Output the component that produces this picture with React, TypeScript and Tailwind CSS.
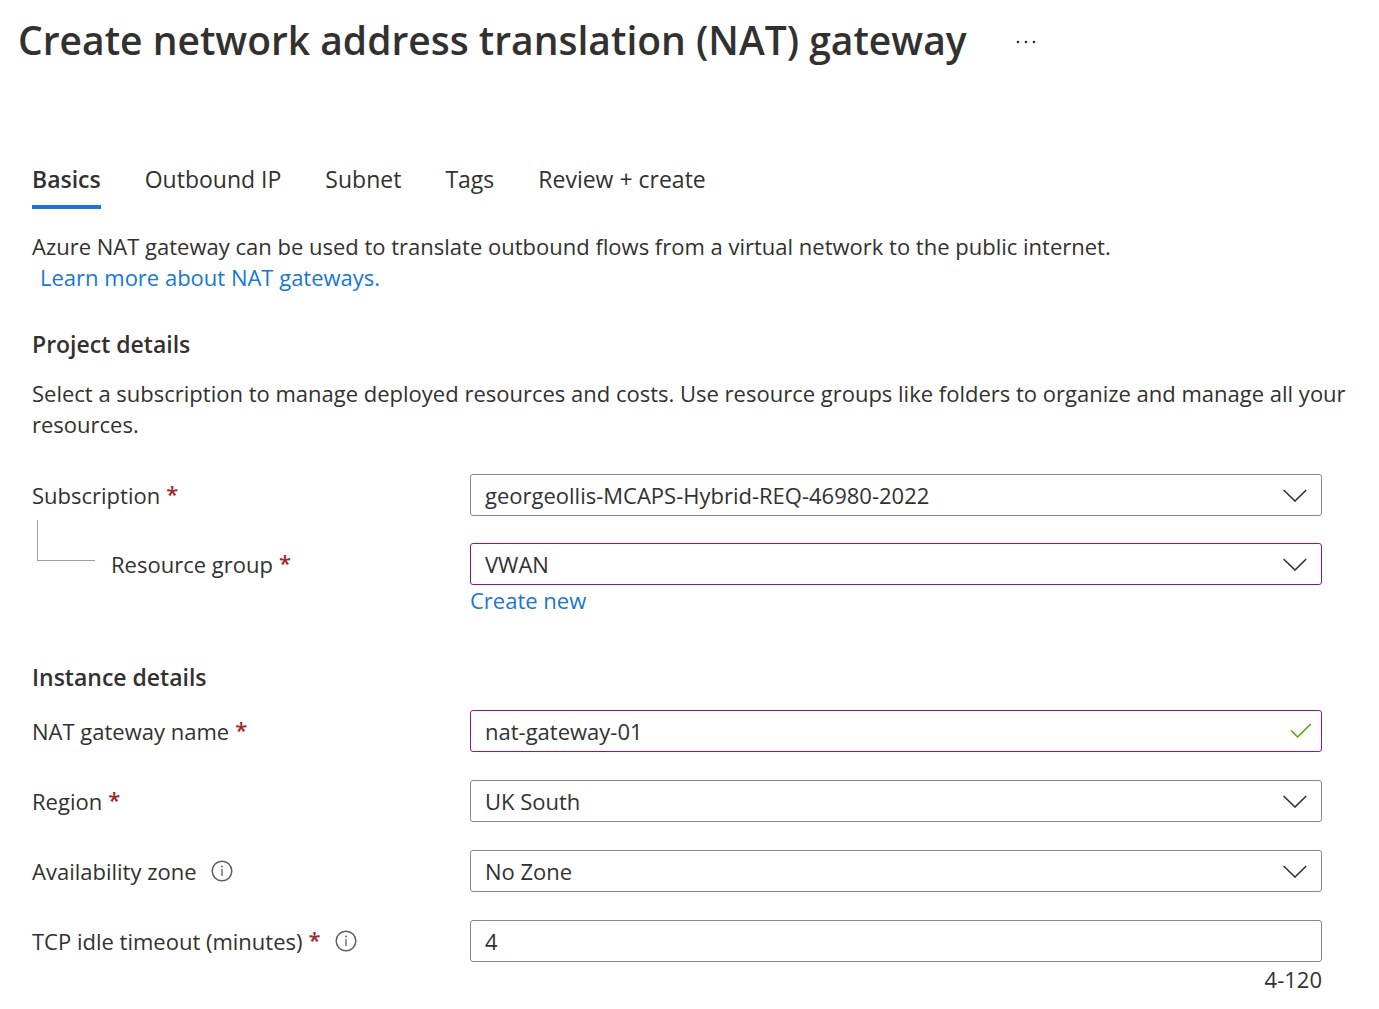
import React, { useState } from 'react';

const TABS = ['Basics', 'Outbound IP', 'Subnet', 'Tags', 'Review + create'];

function Required() {
    return <span className="ml-1.5 align-[2px] leading-none font-semibold text-[#a4262c]">*</span>;
}

function InfoButton({ label }: { label: string }) {
    return (
        <button type="button" aria-label={label} className="ml-3.5 shrink-0 text-[#605e5c]">
            <svg width="22" height="22" viewBox="0 0 22 22" fill="none">
                <circle cx="11" cy="11" r="9.8" stroke="currentColor" strokeWidth="1.5" />
                <path d="M11 9v7" stroke="currentColor" strokeWidth="1.3" />
                <circle cx="11" cy="6.5" r="0.9" fill="currentColor" />
            </svg>
        </button>
    );
}

interface FieldProps {
    id: string;
    label: string;
    required?: boolean;
    nested?: boolean;
    info?: boolean;
    children: React.ReactNode;
}

function Field({ id, label, required, nested, info, children }: FieldProps) {
    return (
        <div className="flex items-start">
            <div className="flex h-[42px] w-[438px] shrink-0 items-center">
                {nested && (
                    <span className="-mt-[23px] mr-4 ml-[5px] h-[41px] w-[58px] shrink-0 self-start border-b border-l border-[#a19f9d]" />
                )}
                <label htmlFor={id}>
                    {label}
                    {required && <Required />}
                </label>
                {info && <InfoButton label={`About ${label}`} />}
            </div>
            <div className="min-w-0 flex-1">{children}</div>
        </div>
    );
}

interface SelectProps {
    id: string;
    options: string[];
    edited?: boolean;
}

function Select({ id, options, edited }: SelectProps) {
    return (
        <div className="relative">
            <select
                id={id}
                className={`block h-[42px] w-full appearance-none rounded-[3px] border bg-white pr-12 pl-3.5 outline-none ${
                    edited ? 'border-[#881798]' : 'border-[#8a8886]'
                }`}
            >
                {options.map((option) => (
                    <option key={option}>{option}</option>
                ))}
            </select>
            <svg
                className="pointer-events-none absolute top-[15px] right-[15px]"
                width="24"
                height="13"
                viewBox="0 0 24 13"
                fill="none"
            >
                <path d="M0.6 1 12 12 23.2 1" stroke="#323130" strokeWidth="1.6" />
            </svg>
        </div>
    );
}

export default function App() {
    const [activeTab, setActiveTab] = useState('Basics');
    const [name, setName] = useState('nat-gateway-01');
    const [timeout, setIdleTimeout] = useState('4');

    return (
        <div className="bg-white font-['Open_Sans',sans-serif] text-[22px] leading-[31px] text-[#323130]">
            <header className="flex h-20 items-center pl-[18px]">
                <h1 className="text-[39px] leading-[80px] font-semibold">
                    Create network address translation (NAT) gateway
                </h1>
                <button type="button" aria-label="More actions" className="mt-1 ml-12">
                    <svg width="22" height="4" viewBox="0 0 22 4" fill="#323130">
                        <circle cx="3" cy="2" r="1.3" />
                        <circle cx="11" cy="2" r="1.3" />
                        <circle cx="19" cy="2" r="1.3" />
                    </svg>
                </button>
            </header>

            <main className="pt-[77px] pr-[57px] pb-3 pl-8">
                <nav className="flex gap-11 text-[23px]">
                    {TABS.map((tab) => (
                        <button
                            key={tab}
                            type="button"
                            onClick={() => setActiveTab(tab)}
                            className={`h-[52px] border-b-4 pb-1 ${
                                tab === activeTab ? 'border-[#1677d6] font-semibold' : 'border-transparent'
                            }`}
                        >
                            {tab}
                        </button>
                    ))}
                </nav>

                <p className="mt-[22px]">
                    Azure NAT gateway can be used to translate outbound flows from a virtual network to the public internet.
                    <a href="#learn" className="ml-2 block text-[#1677d6]">
                        Learn more about NAT gateways.
                    </a>
                </p>

                <h2 className="mt-9 text-[23px] font-semibold">Project details</h2>
                <p className="mt-[18px] -mr-8">
                    Select a subscription to manage deployed resources and costs. Use resource groups like folders to organize and
                    manage all your resources.
                </p>

                <div className="mt-[34px] flex flex-col gap-[27px]">
                    <Field id="subscription" label="Subscription" required>
                        <Select id="subscription" options={['georgeollis-MCAPS-Hybrid-REQ-46980-2022']} />
                    </Field>
                    <Field id="resource-group" label="Resource group" required nested>
                        <Select id="resource-group" options={['VWAN']} edited />
                        <a href="#create" className="block w-fit text-[#1677d6]">
                            Create new
                        </a>
                    </Field>
                </div>

                <h2 className="mt-[46px] text-[23px] font-semibold">Instance details</h2>
                <div className="mt-[17px] flex flex-col gap-7">
                    <Field id="name" label="NAT gateway name" required>
                        <div className="relative">
                            <input
                                id="name"
                                value={name}
                                onChange={(e) => setName(e.target.value)}
                                className="block h-[42px] w-full rounded-[3px] border border-[#881798] pr-12 pl-3.5 outline-none"
                            />
                            <svg
                                className="pointer-events-none absolute top-[13px] right-[10px]"
                                width="22"
                                height="16"
                                viewBox="0 0 22 16"
                                fill="none"
                            >
                                <path d="M1 7.5 7.7 14 20.8 1" stroke="#57a300" strokeWidth="1.6" />
                            </svg>
                        </div>
                    </Field>
                    <Field id="region" label="Region" required>
                        <Select id="region" options={['UK South']} />
                    </Field>
                    <Field id="zone" label="Availability zone" info>
                        <Select id="zone" options={['No Zone']} />
                    </Field>
                    <Field id="timeout" label="TCP idle timeout (minutes)" required info>
                        <input
                            id="timeout"
                            value={timeout}
                            onChange={(e) => setIdleTimeout(e.target.value)}
                            className="block h-[42px] w-full rounded-[3px] border border-[#8a8886] px-3.5 outline-none"
                        />
                        <p className="mt-0.5 text-right">4-120</p>
                    </Field>
                </div>
            </main>
        </div>
    );
}
